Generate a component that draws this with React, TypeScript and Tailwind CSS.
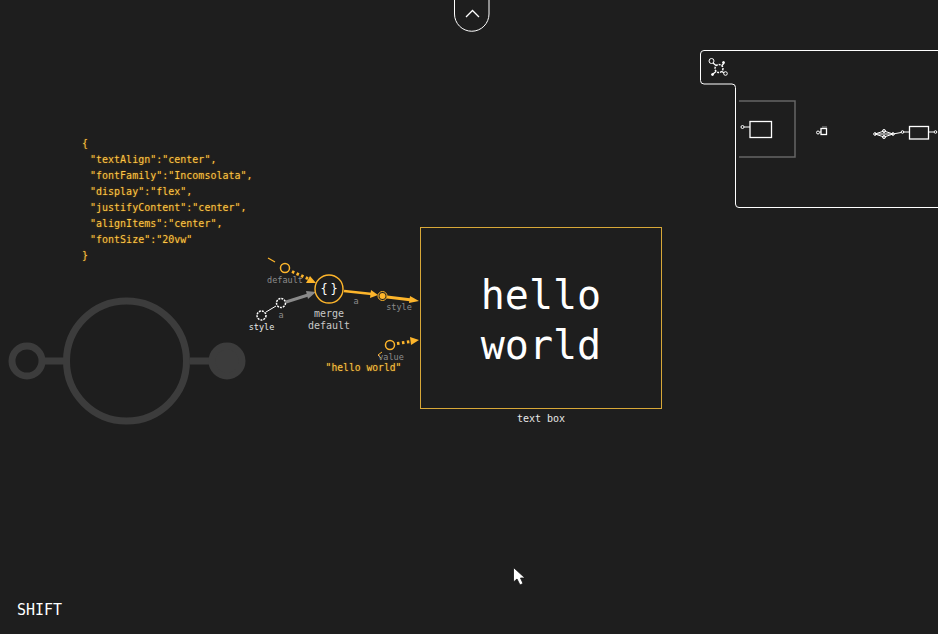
const mono = "font-['DejaVu_Sans_Mono','Liberation_Mono',monospace]";
const YELLOW = "#fdb52b";

const styleJson = [
  '"textAlign":"center",',
  '"fontFamily":"Incomsolata",',
  '"display":"flex",',
  '"justifyContent":"center",',
  '"alignItems":"center",',
  '"fontSize":"20vw"',
];

function Label({ x, y, text, className }: { x: number; y: number; text: string; className: string }) {
  return (
    <div
      className={`absolute -translate-x-1/2 whitespace-pre leading-none ${className}`}
      style={{ left: x, top: y }}
    >
      {text}
    </div>
  );
}

function Graph() {
  return (
    <svg className="absolute inset-0" width="938" height="634" viewBox="0 0 938 634" fill="none">
      {/* big faded node */}
      <g stroke="#3c3c3c" strokeWidth="7">
        <circle cx="126.5" cy="361" r="60" />
        <circle cx="27" cy="361" r="15" />
        <path d="M45 361H65M190 361H210" />
        <circle cx="227" cy="361" r="15" fill="#3c3c3c" />
      </g>

      {/* edges */}
      <path d="M268 258L275 262" stroke={YELLOW} strokeWidth="1.2" />
      <path d="M292 271.5L309 279" stroke={YELLOW} strokeWidth="3" strokeDasharray="2.5 2.5" />
      <path d="M310 276L316 283L306 283Z" fill={YELLOW} />
      <path d="M266 312L276 306" stroke="#fff" strokeWidth="1" />
      <path d="M286 302L308 295" stroke="#8a8a8a" strokeWidth="3" />
      <path d="M306 291L316 292L308 299Z" fill="#8a8a8a" />
      <path d="M344 291L372 294" stroke={YELLOW} strokeWidth="2.5" />
      <path d="M371 290L378 295L370 298Z" fill={YELLOW} />
      <path d="M387 297L412 300" stroke={YELLOW} strokeWidth="3" />
      <path d="M410 296L419 301L409 303Z" fill={YELLOW} />
      <path d="M397 343.5L411 341.5" stroke={YELLOW} strokeWidth="3" strokeDasharray="2.5 2.5" />
      <path d="M410 337L419 340L411 345Z" fill={YELLOW} />
      <path d="M382 352L378 355L381 358" stroke={YELLOW} strokeWidth="1" />

      {/* nodes */}
      <circle cx="285" cy="268" r="4.5" stroke={YELLOW} strokeWidth="1.5" />
      <circle cx="329" cy="289" r="14" stroke={YELLOW} strokeWidth="1.4" />
      <circle cx="382.5" cy="296" r="4.5" stroke={YELLOW} strokeWidth="1" />
      <circle cx="382.5" cy="296" r="3" fill={YELLOW} />
      <circle cx="390" cy="345" r="4.5" stroke={YELLOW} strokeWidth="1.5" />
      <circle cx="281" cy="303" r="4.5" stroke="#fff" strokeWidth="1.5" strokeDasharray="2 1" />
      <circle cx="261.5" cy="315.5" r="4.5" stroke="#fff" strokeWidth="1.5" strokeDasharray="2 1" />

      {/* collapse button */}
      <path d="M454.5 0V14A17.25 17.25 0 0 0 489 14V0" stroke="#fff" strokeWidth="1" />
      <path d="M466 17L472.5 10.5L479 17" stroke="#fff" strokeWidth="1.3" />

      {/* minimap panel */}
      <path
        d="M938 50.5H704A3.5 3.5 0 0 0 700.5 54V80.5A3.5 3.5 0 0 0 704 84H732A3.5 3.5 0 0 1 735.5 87.5V204A3.5 3.5 0 0 0 739 207.5H938"
        stroke="#fff"
        strokeWidth="1"
      />
      <path d="M739 101H795V157H739" stroke="#666" strokeWidth="1.5" />
      <g stroke="#fff" strokeWidth="1">
        {/* graph icon */}
        <circle cx="719" cy="68.5" r="4" strokeWidth="1.4" strokeDasharray="2 1" />
        <path d="M713 63L716 65.5M722 65.5L724 63M716 71.5L713 74M722 71.5L724 73" strokeWidth="1.3" />
        <circle cx="711.5" cy="61" r="2.5" />
        <circle cx="725.5" cy="73.5" r="1.8" />
        <circle cx="723.5" cy="62.5" r="1" fill="#fff" />
        <circle cx="712.5" cy="74.5" r="1" fill="#fff" />

        {/* inside grey frame */}
        <rect x="750" y="121.5" width="21.5" height="16" strokeWidth="1.3" />
        <circle cx="742.5" cy="127" r="1.5" />
        <path d="M744 127H750" />

        {/* middle node */}
        <rect x="821" y="128.5" width="5.5" height="6" strokeWidth="1.3" />
        <path d="M822 127H827" stroke="#999" />
        <circle cx="818" cy="132.5" r="1.5" />
        <path d="M819.5 132H821" />

        {/* right chain */}
        <rect x="909.5" y="126.5" width="19" height="12.5" strokeWidth="1.3" />
        <path d="M875 134L884 131L893 134L884 137Z M875 134H893M893 134L901 132.5M903 132H909.5M929 132H934" />
        <circle cx="875" cy="134" r="1.3" />
        <circle cx="884" cy="131" r="1.5" />
        <circle cx="884" cy="137" r="1.5" />
        <circle cx="893" cy="134" r="1.3" />
        <circle cx="902.5" cy="132" r="1.3" />
        <circle cx="935.5" cy="132" r="1.3" />
      </g>

      {/* pointer */}
      <path
        d="M513.5 567.5V582L517 579L520 585L523 583.5L520.5 578H525Z"
        fill="#fff"
        stroke="#111"
        strokeWidth="0.8"
      />
    </svg>
  );
}

export default function App() {
  return (
    <div className={`relative h-screen w-full overflow-hidden bg-[#1e1e1e] ${mono}`}>
      <Graph />

      <div className="absolute left-[82px] top-[136px] flex flex-col whitespace-pre text-[10px] leading-[16px] text-[#fdc64a] [text-shadow:0_0_2px_#805500]">
        <div>{"{"}</div>
        {styleJson.map((line) => (
          <div key={line} className="pl-2">
            {line}
          </div>
        ))}
        <div>{"}"}</div>
      </div>

      <Label x={285} y={276} text="default" className="text-[8.5px] text-[#8c8c8c]" />
      <Label x={281} y={311} text="a" className="text-[8.5px] text-[#8c8c8c]" />
      <Label x={261.5} y={323} text="style" className="text-[8.5px] text-[#e8e8e8]" />
      <Label x={330.5} y={283} text="{}" className="text-[12px] tracking-[2.8px] text-white" />
      <Label x={329} y={309} text="merge" className="text-[10px] text-[#c8c8c8]" />
      <Label x={329} y={321} text="default" className="text-[10px] text-[#c8c8c8]" />
      <Label x={356} y={297} text="a" className="text-[8.5px] text-[#8c8c8c]" />
      <Label x={399} y={303} text="style" className="text-[8.5px] text-[#8c8c8c]" />
      <Label x={391} y={353} text="value" className="text-[8.5px] text-[#8c8c8c]" />
      <Label x={363.5} y={363} text={'"hello world"'} className="text-[9.7px] text-[#fdc64a] [text-shadow:0_0_2px_#805500]" />

      <div className="absolute left-[420px] top-[227px] flex h-[182px] w-[242px] items-center justify-center border border-[#d8a838] pt-1 text-center text-[40px] leading-[50px] text-white">
        hello
        <br />
        world
      </div>
      <Label x={541} y={414} text="text box" className="text-[10px] text-[#e8e8e8]" />

      <div className="absolute left-[17px] top-[603px] text-[15px] leading-none text-white">SHIFT</div>
    </div>
  );
}
